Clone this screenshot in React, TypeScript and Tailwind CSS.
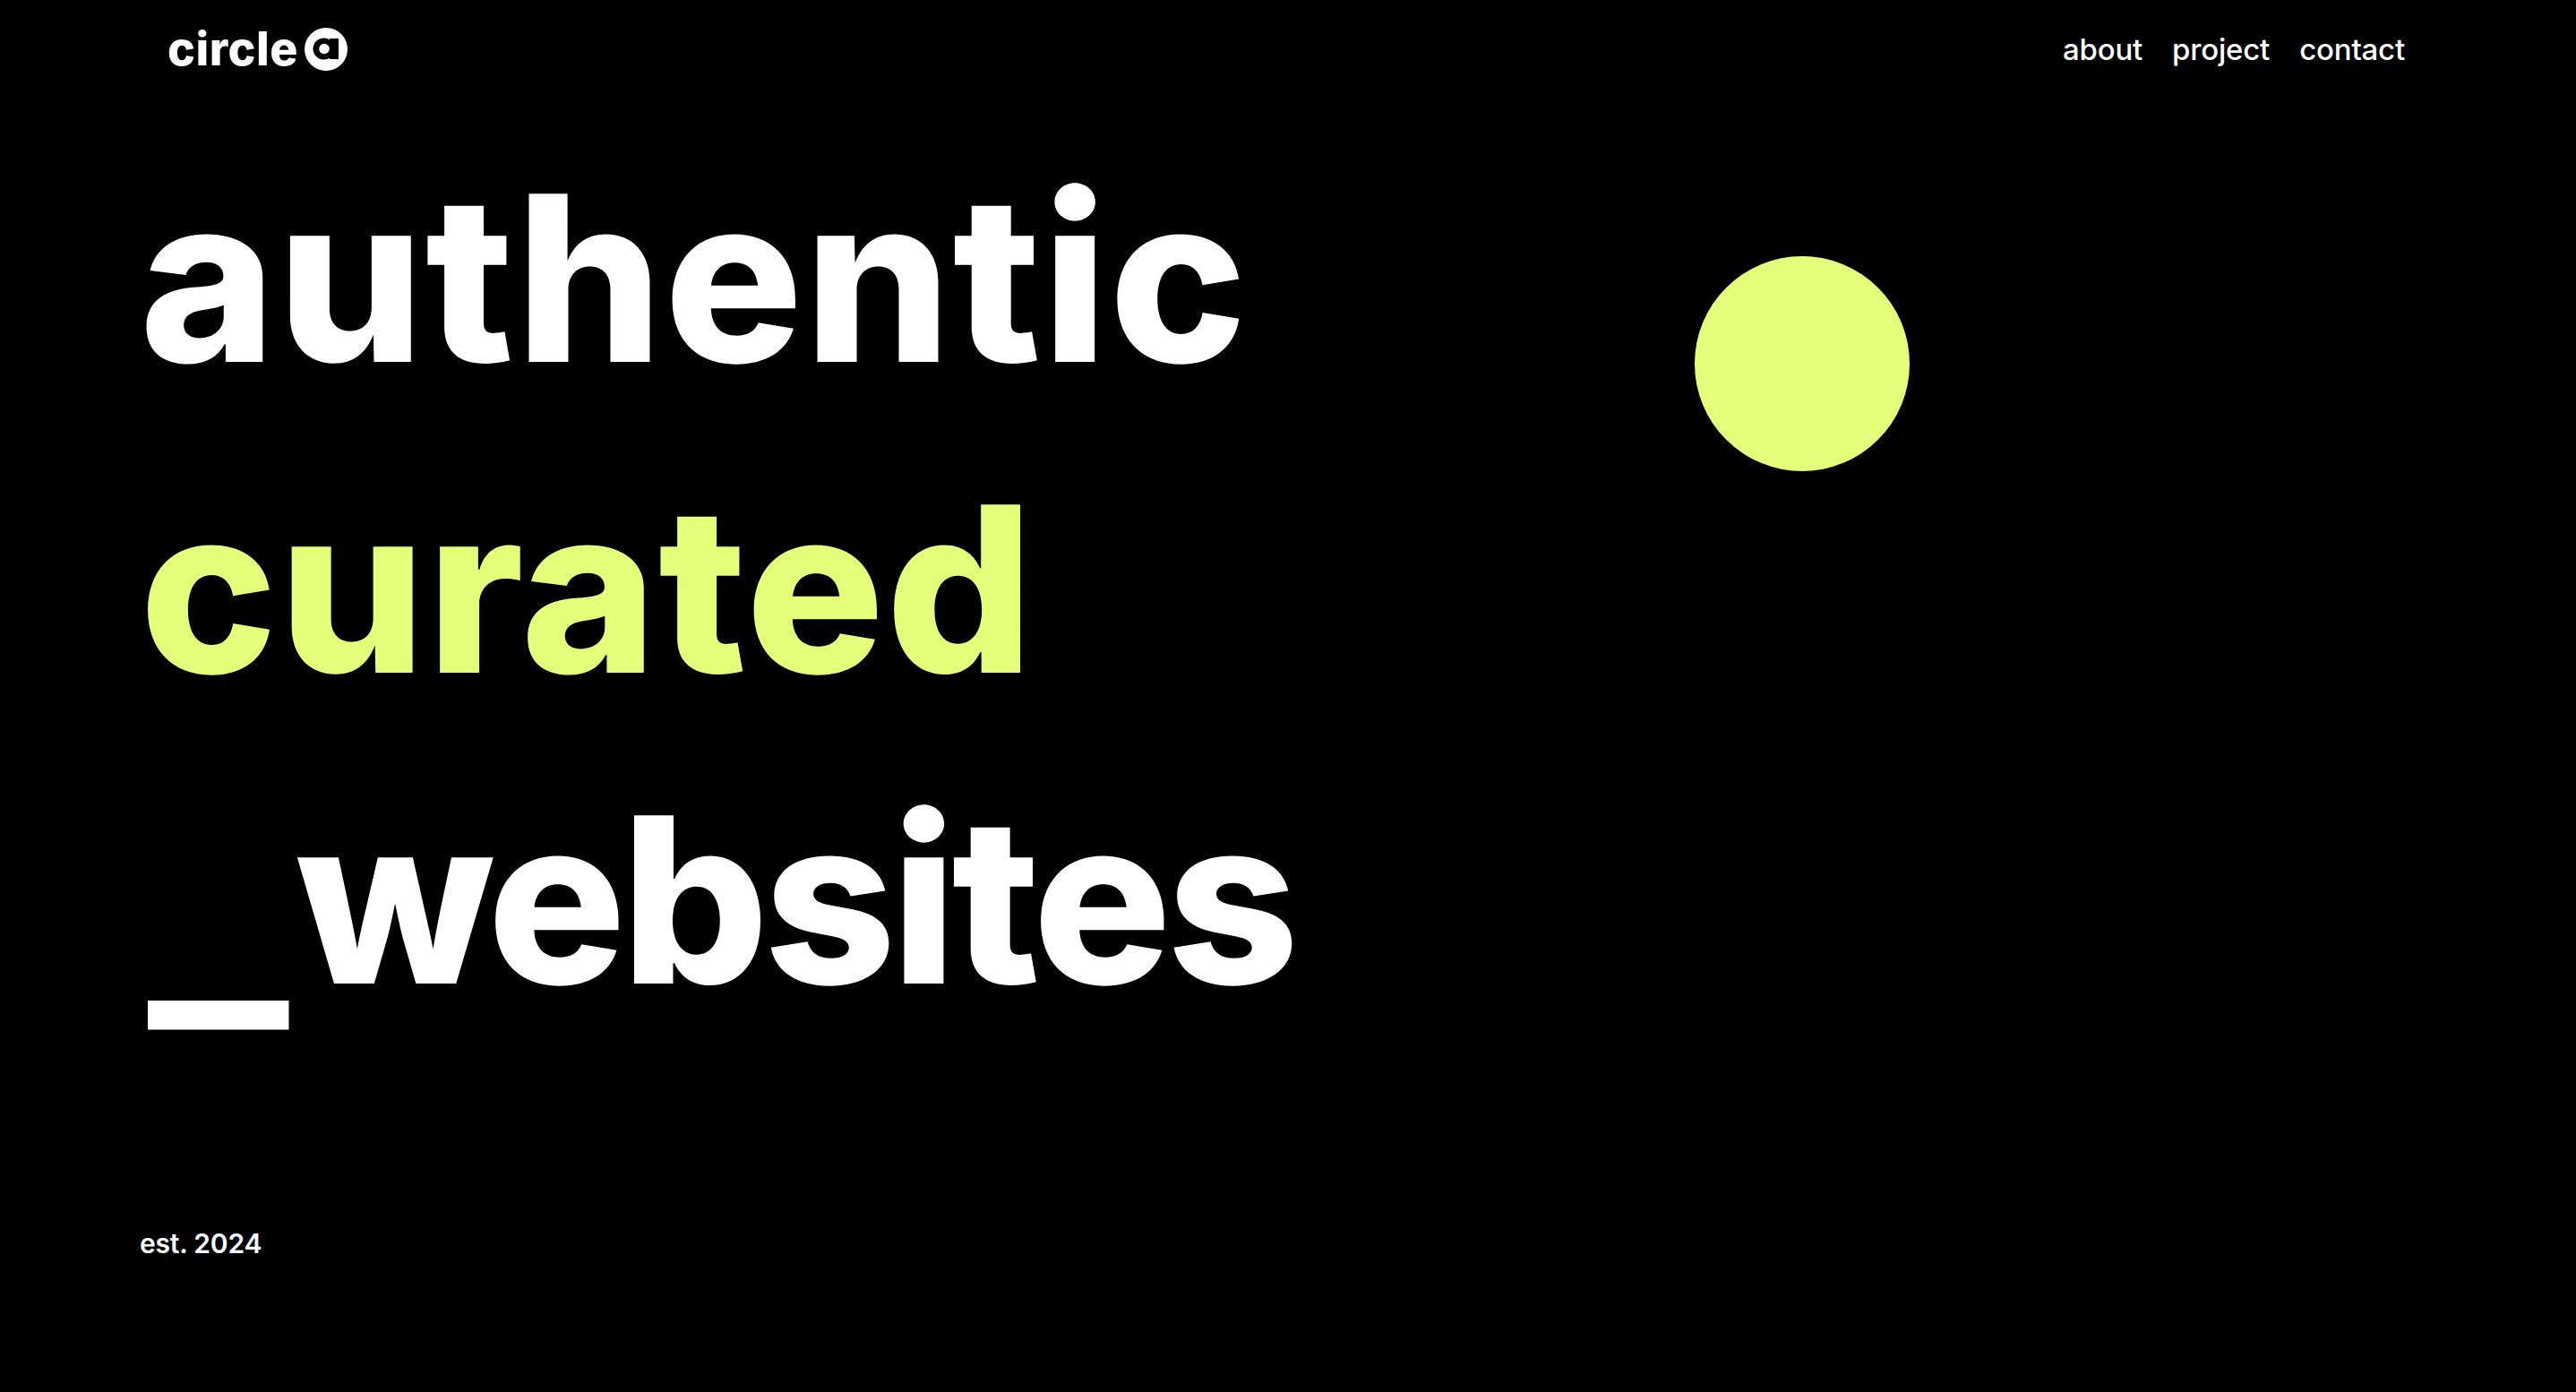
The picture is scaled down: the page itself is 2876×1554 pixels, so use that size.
const navItems = ['about', 'project', 'contact']

const heading = "font-['Inter',sans-serif] font-extrabold [font-variant-ligatures:none]"

function LogoMark() {
  return (
    <svg width="48" height="48" viewBox="0 0 48 48" className="ml-[7px]">
      <circle cx="24" cy="24" r="24" fill="#fff" />
      <circle cx="21.5" cy="23.5" r="12" fill="#000" />
      <rect x="28" y="12" width="10" height="23" fill="#000" />
      <circle cx="22" cy="23.5" r="5.8" fill="#fff" />
    </svg>
  )
}

export default function App() {
  return (
    <div className="h-[1554px] w-[2876px] overflow-hidden bg-black text-white flex flex-col">
      <header className="flex items-center justify-between pl-[187px] pr-[191px] pt-[28px]">
        <div className="flex items-center">
          <span className={`${heading} text-[52px] leading-[54px] tracking-[0.5px]`}>circle</span>
          <LogoMark />
        </div>
        <nav className="flex items-center gap-[33px] font-['Inter',sans-serif] font-medium text-[33px] leading-[54px] tracking-[-0.2px]">
          {navItems.map((item) => (
            <a key={item}>{item}</a>
          ))}
        </nav>
      </header>

      <section className="flex pl-[156px] mt-[55px]">
        <h1 className={`${heading} text-[258px] leading-[347px] tracking-[1.6px] w-[1736px] whitespace-nowrap`}>
          <div>authentic</div>
          <div className="text-[#e6ff7a]">curated</div>
          <div className="tracking-[-5.5px]">
            <span className="inline-block w-[174px] pl-[9px]">
              <span className="inline-block origin-left scale-x-[1.26] translate-y-[19px]">_</span>
            </span>
            websites
          </div>
        </h1>
        <div className="mt-[149px] h-[240px] w-[240px] rounded-full bg-[#e6ff7a]" />
      </section>

      <p className="pl-[156px] mt-[190px] font-['Inter',sans-serif] font-semibold text-[30px] leading-[40px] tracking-[-0.2px]">est. 2024</p>
    </div>
  )
}
